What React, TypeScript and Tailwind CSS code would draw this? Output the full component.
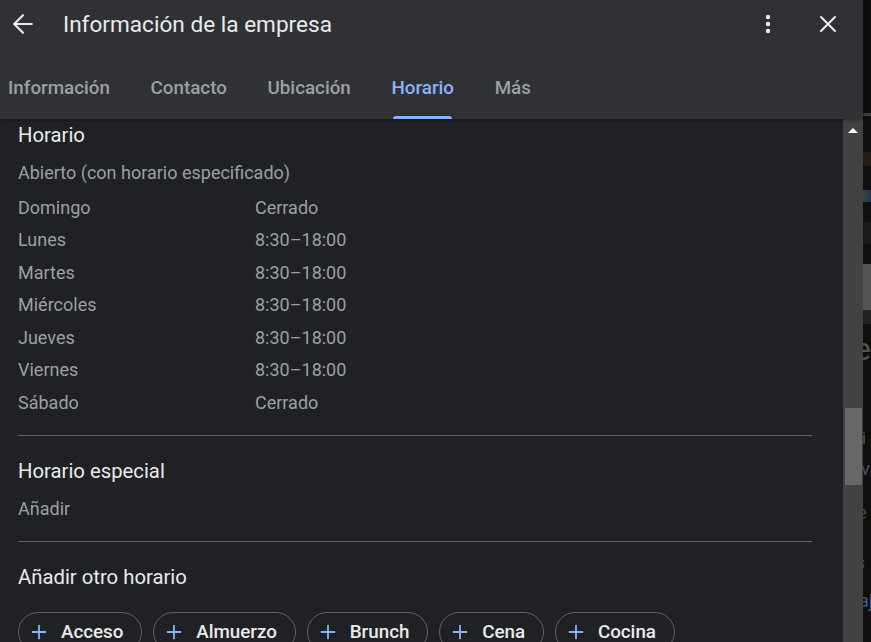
import { ArrowLeft, MoreVertical, X, Plus } from "lucide-react"

const tabs = ["Información", "Contacto", "Ubicación", "Horario", "Más"]

const hours = [
  ["Domingo", "Cerrado"],
  ["Lunes", "8:30–18:00"],
  ["Martes", "8:30–18:00"],
  ["Miércoles", "8:30–18:00"],
  ["Jueves", "8:30–18:00"],
  ["Viernes", "8:30–18:00"],
  ["Sábado", "Cerrado"],
]

const chips = ["Acceso", "Almuerzo", "Brunch", "Cena", "Cocina"]

export default function App() {
  return (
    <div className="flex h-[642px] w-[871px] overflow-hidden bg-[#0f0f0f] font-['Roboto',sans-serif]">
      <div className="flex h-full w-[863px] shrink-0 flex-col">
        <header className="z-10 h-[119px] shrink-0 bg-[#303135] shadow-[0_1px_4px_rgba(0,0,0,0.4)]">
          <div className="flex h-[48px] items-center pl-[8px] pr-[21px]">
            <ArrowLeft className="h-[30px] w-[30px] text-[#e8eaed]" strokeWidth={1.7} />
            <h1 className="ml-[25px] mt-[2px] text-[22.6px] text-[#e8eaed]">Información de la empresa</h1>
            <MoreVertical className="ml-auto h-6 w-6 text-[#e8eaed]" strokeWidth={2.5} />
            <X className="ml-[34px] h-[28px] w-[28px] text-[#e8eaed]" strokeWidth={1.8} />
          </div>
          <nav className="mt-[21px] flex h-[50px] gap-[40.7px] pl-2">
            {tabs.map((t) => (
              <div
                key={t}
                className={
                  t === "Horario"
                    ? "relative flex h-[38px] items-center text-[18.8px] font-medium text-[#8ab4f8]"
                    : "flex h-[38px] items-center text-[18.8px] font-medium text-[#9aa0a6]"
                }
              >
                {t}
                {t === "Horario" && (
                  <span className="absolute -bottom-3 left-[2px] right-[2px] h-[3px] rounded-t-sm bg-[#8ab4f8]" />
                )}
              </div>
            ))}
          </nav>
        </header>

        <div className="flex min-h-0 flex-1">
          <main className="w-[843px] shrink-0 overflow-hidden bg-[#202124] pl-[18px] pr-[31px]">
            <h2 className="mt-[3px] text-[20.3px] leading-[26px] text-[#e8eaed]">Horario</h2>
            <p className="mt-[13px] text-[18px] leading-[24px] text-[#9aa0a6]">Abierto (con horario especificado)</p>
            <div className="mt-[10.5px] flex flex-col gap-[8.5px] pb-[20.5px]">
              {hours.map(([day, time]) => (
                <div key={day} className="flex text-[18px] leading-[24px] text-[#9aa0a6]">
                  <span className="w-[237px]">{day}</span>
                  <span>{time}</span>
                </div>
              ))}
            </div>
            <div className="border-t border-[#5f6368]" />
            <h2 className="mt-[22px] text-[20.3px] leading-[26px] text-[#e8eaed]">Horario especial</h2>
            <p className="mt-[13px] text-[18px] leading-[24px] text-[#9aa0a6]">Añadir</p>
            <div className="mt-[20px] border-t border-[#5f6368]" />
            <h2 className="mt-[22px] text-[20.3px] leading-[26px] text-[#e8eaed]">Añadir otro horario</h2>
            <div className="mt-[22px] flex gap-[10.8px]">
              {chips.map((c) => (
                <div
                  key={c}
                  className="flex h-[40px] shrink-0 items-center gap-[11px] rounded-full border border-[#5f6368] pl-[9px] pr-[18px] text-[18.8px] font-medium text-[#e8eaed]"
                >
                  <Plus className="h-[22px] w-[22px] text-[#8ab4f8]" strokeWidth={2} />
                  {c}
                </div>
              ))}
            </div>
          </main>
          <div className="flex w-5 shrink-0 flex-col items-center bg-[#424242] pt-[9px]">
            <div className="h-0 w-0 border-x-[5px] border-b-[5px] border-x-transparent border-b-white" />
            <div className="mt-[275px] h-[77px] w-[17px] bg-[#686868]" />
          </div>
        </div>
      </div>

      {/* page behind the panel, only a sliver shows */}
      <div className="flex h-full w-2 shrink-0 flex-col overflow-hidden whitespace-nowrap text-[18px] leading-none">
        <div className="mt-[113px] h-[3px] bg-[#3a3a3a]" />
        <div className="mt-[36px] h-[14px] bg-[#241f14]" />
        <div className="mt-[24px] h-[12px] bg-gradient-to-r from-[#2f4f38] to-[#2a2d55]" />
        <div className="mt-[20px] h-[22px] bg-[#1a1a1a]" />
        <div className="mt-[20px] h-[46px] bg-[#555555]" />
        <div className="h-[14px] bg-[#222222]" />
        <div className="mt-[8px] flex h-[34px] items-center -ml-[9px] text-[32px] text-[#555555]">e</div>
        <div className="mt-[63px] flex h-[20px] items-center -ml-[1px] text-[16px] text-[#555555]">i</div>
        <div className="mt-[10px] flex h-[20px] items-center -ml-[2px] text-[#555555]">vi</div>
        <div className="mt-[24px] flex h-[20px] items-center -ml-[6px] text-[#5a4a28]">e</div>
        <div className="mt-[30px] flex h-[20px] items-center -ml-[7px] text-[#444444]">s</div>
        <div className="mt-[18px] flex h-[20px] items-center -ml-[4px] text-[#3f5f90]">aj</div>
      </div>
    </div>
  )
}
